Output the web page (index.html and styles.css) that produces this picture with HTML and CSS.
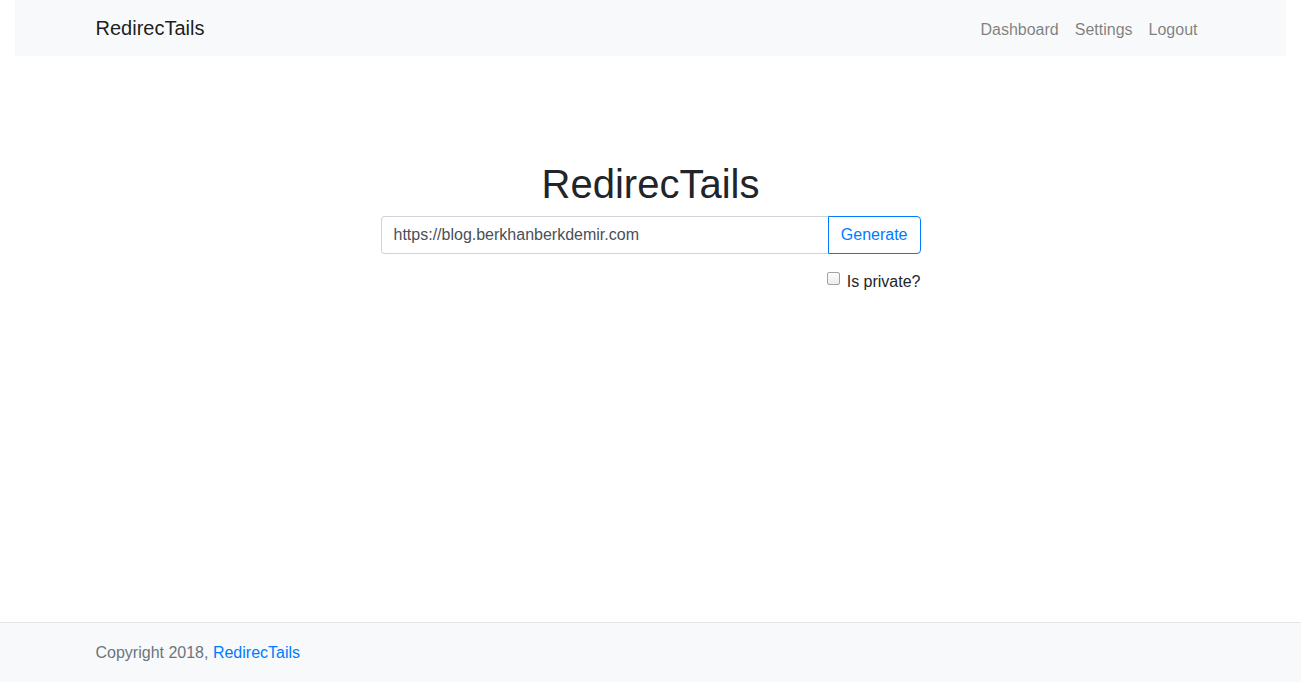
FILE: index.html
```html
<!DOCTYPE html>
<html lang="en">
<head>
<meta charset="utf-8">
<title>RedirecTails</title>
<link rel="stylesheet" href="styles.css">
</head>
<body>
<div class="page">
  <div class="nav-wrap">
    <nav class="navbar">
      <div class="container nav-inner">
        <a class="brand" href="#">RedirecTails</a>
        <ul class="nav-links">
          <li><a href="#">Dashboard</a></li>
          <li><a href="#">Settings</a></li>
          <li><a href="#">Logout</a></li>
        </ul>
      </div>
    </nav>
  </div>
  <main class="main">
    <div class="container">
      <div class="form-col">
        <h1 class="title">RedirecTails</h1>
        <form class="gen-form">
          <div class="input-group">
            <input class="form-control" type="text" value="https://blog.berkhanberkdemir.com">
            <button class="btn-outline" type="button">Generate</button>
          </div>
          <div class="check-row">
            <input class="check" type="checkbox" id="private">
            <label for="private" class="check-label">Is private?</label>
          </div>
        </form>
      </div>
    </div>
  </main>
  <footer class="footer">
    <div class="container">
      <span class="footer-text">Copyright 2018, <a href="#">RedirecTails</a></span>
    </div>
  </footer>
</div>
</body>
</html>
```

FILE: styles.css
```css
* { box-sizing: border-box; }
html, body { margin: 0; padding: 0; }
body {
  font-family: "Liberation Sans", Arial, sans-serif;
  font-size: 16px;
  line-height: 1.5;
  color: #212529;
  background: #fff;
}
a { text-decoration: none; }
.page {
  min-height: 100vh;
  display: flex;
  flex-direction: column;
}
.container {
  width: 100%;
  max-width: 1140px;
  margin: 0 auto;
  padding: 0 15px;
}
.nav-wrap { padding: 0 15px; }
.navbar {
  background: #f8f9fa;
  padding: 8px 0;
  height: 56px;
}
.nav-inner {
  display: flex;
  align-items: baseline;
  justify-content: space-between;
}
.brand {
  font-size: 20px;
  line-height: 30px;
  padding: 5px 0;
  color: rgba(0,0,0,.9);
}
.nav-links {
  list-style: none;
  margin: 0;
  padding: 0;
  display: flex;
}
.nav-links a {
  display: block;
  padding: 0 8px;
  color: rgba(0,0,0,.5);
  line-height: 24px;
}
.main {
  flex: 1;
  padding-top: 104px;
}
.form-col {
  width: 540px;
  margin: 0 auto;
}
.title {
  margin: 0 0 8px;
  font-size: 40px;
  font-weight: 500;
  line-height: 1.2;
  text-align: center;
}
.input-group {
  display: flex;
  margin-bottom: 16px;
}
.form-control {
  flex: 1;
  min-width: 0;
  height: 38px;
  padding: 6px 12px;
  font: inherit;
  font-size: 16px;
  color: #495057;
  border: 1px solid #ced4da;
  border-right: 0;
  border-radius: 4px 0 0 4px;
  background: #fff;
}
.btn-outline {
  height: 38px;
  padding: 6px 12px;
  font: inherit;
  font-size: 16px;
  color: #007bff;
  background: #fff;
  border: 1px solid #007bff;
  border-radius: 0 4px 4px 0;
}
.check-row {
  display: flex;
  justify-content: flex-end;
  align-items: flex-start;
  height: 24px;
}
.check {
  -webkit-appearance: none;
  appearance: none;
  width: 13px;
  height: 13px;
  margin: 2px 7px 0 0;
  border: 1px solid #a3a3a3;
  border-radius: 2px;
  background: linear-gradient(#fdfdfd, #ececec);
}
.check-label { line-height: 24px; }
.footer {
  height: 60px;
  background: #f8f9fa;
  border-top: 1px solid #e5e5e5;
}
.footer-text {
  line-height: 59px;
  color: #6c757d;
}
.footer-text a { color: #007bff; }
```
